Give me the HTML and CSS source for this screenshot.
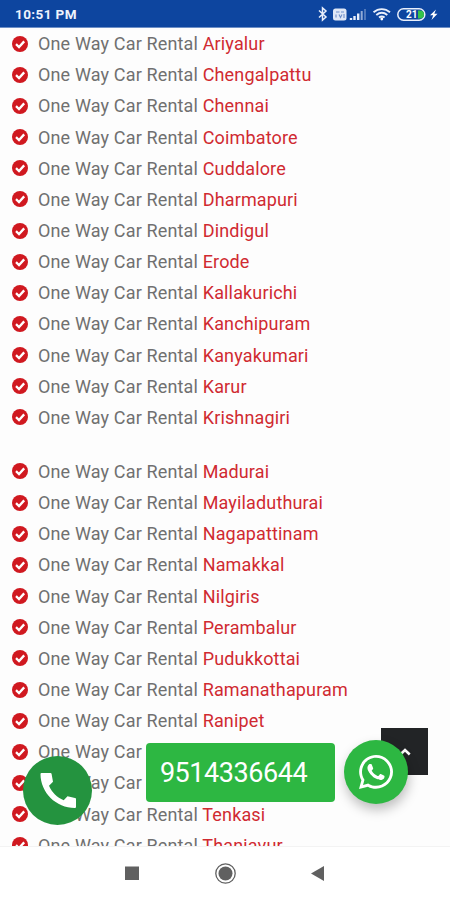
FILE: index.html
```
<!DOCTYPE html>
<html lang="en">
<head>
<meta charset="utf-8">
<title>One Way Car Rental</title>
<link rel="stylesheet" href="styles.css">
</head>
<body>
<svg class="defs" width="0" height="0" aria-hidden="true">
  <symbol id="check" viewBox="0 0 16 16">
    <circle cx="8" cy="8" r="8" fill="#d01920"/>
    <path d="M4 8.2 7 11 12.2 5.4" fill="none" stroke="#fff" stroke-width="2.3"/>
  </symbol>
</svg>
<header class="status">
  <span class="time">10:51 PM</span>
  <svg class="status-icons" width="124" height="16" viewBox="0 0 124 16" fill="none" stroke="#e9effb">
    <path d="M2 4.500 9 11 5.500 14V2L9 5 2 11.500" stroke-width="1.500"/>
    <rect x="16" y="2.500" width="13.500" height="12" rx="2.500" fill="#dfe7f6" stroke="none"/>
    <path d="M19 6h3.500M24 6h3M19 8.500v3M22 8.500l1.500 3 1.500-3M27 8v4" stroke="#6f8fc9" stroke-width="1.100"/>
    <path d="M34 14v-2M37.500 14v-4M41.200 14V7.500" stroke-width="2.400"/>
    <path d="M44.700 14V5" stroke-width="2" opacity=".6"/><path d="M48 14V3" stroke-width="2" opacity=".3"/>
    <path d="M56.500 6.300c5-4.200 11.500-4.200 16.500 0M59.300 9c3.500-2.800 7.500-2.800 11 0M62 11.500c1.800-1.400 3.800-1.400 5.600 0" stroke-width="1.900"/>
    <circle cx="64.800" cy="13" r="1.400" fill="#fff" stroke="none"/>
    <rect x="80.800" y="2.800" width="27" height="11.400" rx="5.700" stroke-width="1.500"/>
    <path d="M101 4.500h2a4 4 0 0 1 0 8h-2z" fill="#35c34a" stroke="none"/>
    <text x="89" y="12" class="battery">21</text>
    <path d="M119 3.500 113 9.300h3.200L114.500 14l6-6.300h-3.200z" fill="#fff" stroke="none"/>
  </svg>
</header>
<main class="page">
  <ul class="list">
    <li><svg><use href="#check"/></svg><span>One Way Car Rental <a>Ariyalur</a></span></li>
    <li><svg><use href="#check"/></svg><span>One Way Car Rental <a>Chengalpattu</a></span></li>
    <li><svg><use href="#check"/></svg><span>One Way Car Rental <a>Chennai</a></span></li>
    <li><svg><use href="#check"/></svg><span>One Way Car Rental <a>Coimbatore</a></span></li>
    <li><svg><use href="#check"/></svg><span>One Way Car Rental <a>Cuddalore</a></span></li>
    <li><svg><use href="#check"/></svg><span>One Way Car Rental <a>Dharmapuri</a></span></li>
    <li><svg><use href="#check"/></svg><span>One Way Car Rental <a>Dindigul</a></span></li>
    <li><svg><use href="#check"/></svg><span>One Way Car Rental <a>Erode</a></span></li>
    <li><svg><use href="#check"/></svg><span>One Way Car Rental <a>Kallakurichi</a></span></li>
    <li><svg><use href="#check"/></svg><span>One Way Car Rental <a>Kanchipuram</a></span></li>
    <li><svg><use href="#check"/></svg><span>One Way Car Rental <a>Kanyakumari</a></span></li>
    <li><svg><use href="#check"/></svg><span>One Way Car Rental <a>Karur</a></span></li>
    <li><svg><use href="#check"/></svg><span>One Way Car Rental <a>Krishnagiri</a></span></li>
  </ul>
  <ul class="list">
    <li><svg><use href="#check"/></svg><span>One Way Car Rental <a>Madurai</a></span></li>
    <li><svg><use href="#check"/></svg><span>One Way Car Rental <a>Mayiladuthurai</a></span></li>
    <li><svg><use href="#check"/></svg><span>One Way Car Rental <a>Nagapattinam</a></span></li>
    <li><svg><use href="#check"/></svg><span>One Way Car Rental <a>Namakkal</a></span></li>
    <li><svg><use href="#check"/></svg><span>One Way Car Rental <a>Nilgiris</a></span></li>
    <li><svg><use href="#check"/></svg><span>One Way Car Rental <a>Perambalur</a></span></li>
    <li><svg><use href="#check"/></svg><span>One Way Car Rental <a>Pudukkottai</a></span></li>
    <li><svg><use href="#check"/></svg><span>One Way Car Rental <a>Ramanathapuram</a></span></li>
    <li><svg><use href="#check"/></svg><span>One Way Car Rental <a>Ranipet</a></span></li>
    <li><svg><use href="#check"/></svg><span>One Way Car</span></li>
    <li><svg><use href="#check"/></svg><span>One Way Car</span></li>
    <li><svg><use href="#check"/></svg><span>One Way Car Rental <a>Tenkasi</a></span></li>
    <li><svg><use href="#check"/></svg><span>One Way Car Rental <a>Thanjavur</a></span></li>
  </ul>
</main>
<a class="call">
  <svg width="36" height="36" viewBox="0 0 36 36"><path fill="#fff" d="M1.500 0H10.500Q11.500 0 11.600 1L13 8.700 9 12.800C12 19.500 17 24.500 23.700 27.300L27.500 23.300 35 25Q36 25.200 36 26V34Q36 35 35 35C16 35 .5 19.500.5 1Q.5 0 1.500 0Z"/></svg>
</a>
<a class="number">9514336644</a>
<a class="top"><svg width="12" height="8" viewBox="0 0 12 8"><path d="M1.300 6.500 6 2l4.700 4.500" fill="none" stroke="#fff" stroke-width="2.600"/></svg></a>
<a class="whatsapp">
  <svg width="34" height="34" viewBox="0 0 448 448"><path fill="#fff" d="M380.900 65.100C339 23.100 283.200 0 223.900 0 101.500 0 1.900 99.600 1.900 222c0 39.100 10.200 77.300 29.600 111L0 448l117.700-30.900c32.400 17.700 68.900 27 106.100 27h.1c122.300 0 224.100-99.600 224.100-222 0-59.300-25.200-115-67.100-157zM223.900 406.700c-33.200 0-65.700-8.900-94-25.700l-6.700-4-69.800 18.300L72 327.200l-4.400-7c-18.500-29.400-28.200-63.300-28.200-98.200 0-101.700 82.800-184.500 184.600-184.500 49.300 0 95.600 19.200 130.400 54.100 34.800 34.900 56.200 81.200 56.100 130.500 0 101.800-84.900 184.600-186.600 184.600z"/><path fill="#fff" d="M325.100 268.500c-5.500-2.800-32.800-16.200-37.900-18-5.100-1.900-8.800-2.800-12.500 2.800-3.700 5.600-14.300 18-17.600 21.800-3.200 3.700-6.500 4.200-12 1.400-32.600-16.300-54-29.100-75.500-66-5.700-9.800 5.700-9.100 16.300-30.300 1.800-3.700.9-6.900-.5-9.700-1.400-2.800-12.500-30.100-17.100-41.200-4.500-10.800-9.100-9.300-12.500-9.500-3.200-.2-6.900-.2-10.600-.2-3.700 0-9.700 1.400-14.800 6.900-5.100 5.600-19.400 19-19.400 46.300 0 27.300 19.900 53.700 22.600 57.400 2.800 3.700 39.100 59.700 94.800 83.800 35.200 15.200 49 16.500 66.600 13.900 10.700-1.600 32.800-13.400 37.400-26.400 4.600-13 4.600-24.100 3.200-26.400-1.300-2.500-5-3.900-10.500-6.600z"/></svg>
</a>
<nav class="nav">
  <svg width="450" height="53" viewBox="0 0 450 53">
    <rect x="125" y="19.500" width="14" height="13.500" fill="#606060"/>
    <circle cx="225.500" cy="26.500" r="9.700" fill="none" stroke="#606060" stroke-width="1.300"/>
    <circle cx="225.500" cy="26.500" r="7" fill="#606060"/>
    <path d="M311 26.500 324 19v15z" fill="#606060"/>
  </svg>
</nav>
</body>
</html>
```
FILE: styles.css
```
* { box-sizing: border-box; }
body {
  margin: 0;
  width: 450px;
  height: 900px;
  overflow: hidden;
  display: flex;
  flex-direction: column;
  position: relative;
  background: #fdfdfd;
  font-family: Roboto, "Liberation Sans", sans-serif;
}
.defs { position: absolute; }
.status {
  flex: none;
  height: 28px;
  padding: 1px 9px 0 15px;
  display: flex;
  align-items: center;
  justify-content: space-between;
  background: #0d459f;
  border-bottom: 1px solid #6d8fc6;
  color: #eef3fc;
}
.time { font-size: 13.500px; font-weight: 700; letter-spacing: 0.400px; }
.battery { font-size: 10px; font-weight: 700; fill: #fff; stroke: none; }
.page { flex: 1; min-height: 0; overflow: hidden; }
.list { list-style: none; margin: 0 0 22.800px; padding: 0 0 0 12px; }
.list li {
  display: flex;
  align-items: center;
  gap: 10px;
  height: 31.170px;
  font-size: 18px;
  line-height: 31px;
  letter-spacing: 0.150px;
  color: #707070;
  white-space: nowrap;
}
.list svg { width: 16px; height: 16px; flex: none; }
.list a { color: #d02a31; }
.nav { flex: none; height: 54px; background: #fff; border-top: 1px solid #f3f3f3; }
.nav svg { display: block; }
.call, .number, .top, .whatsapp {
  position: absolute;
  display: flex;
  align-items: center;
  justify-content: center;
}
.call { left: 23px; top: 756px; width: 69px; height: 69px; border-radius: 50%; background: #24933f; }
.number {
  left: 146px; top: 743px; width: 189px; height: 59px;
  padding-right: 14px;
  border-radius: 4px;
  background: #2db742;
  color: #fff;
  font-size: 27px;
  letter-spacing: -0.450px;
}
.top { left: 381px; top: 728px; width: 47px; height: 47px; background: #222426; }
.whatsapp {
  left: 344px; top: 740px; width: 64px; height: 64px;
  border-radius: 50%;
  background: #2db742;
  box-shadow: 1px 6px 12px rgba(0, 0, 0, 0.25);
}
```
